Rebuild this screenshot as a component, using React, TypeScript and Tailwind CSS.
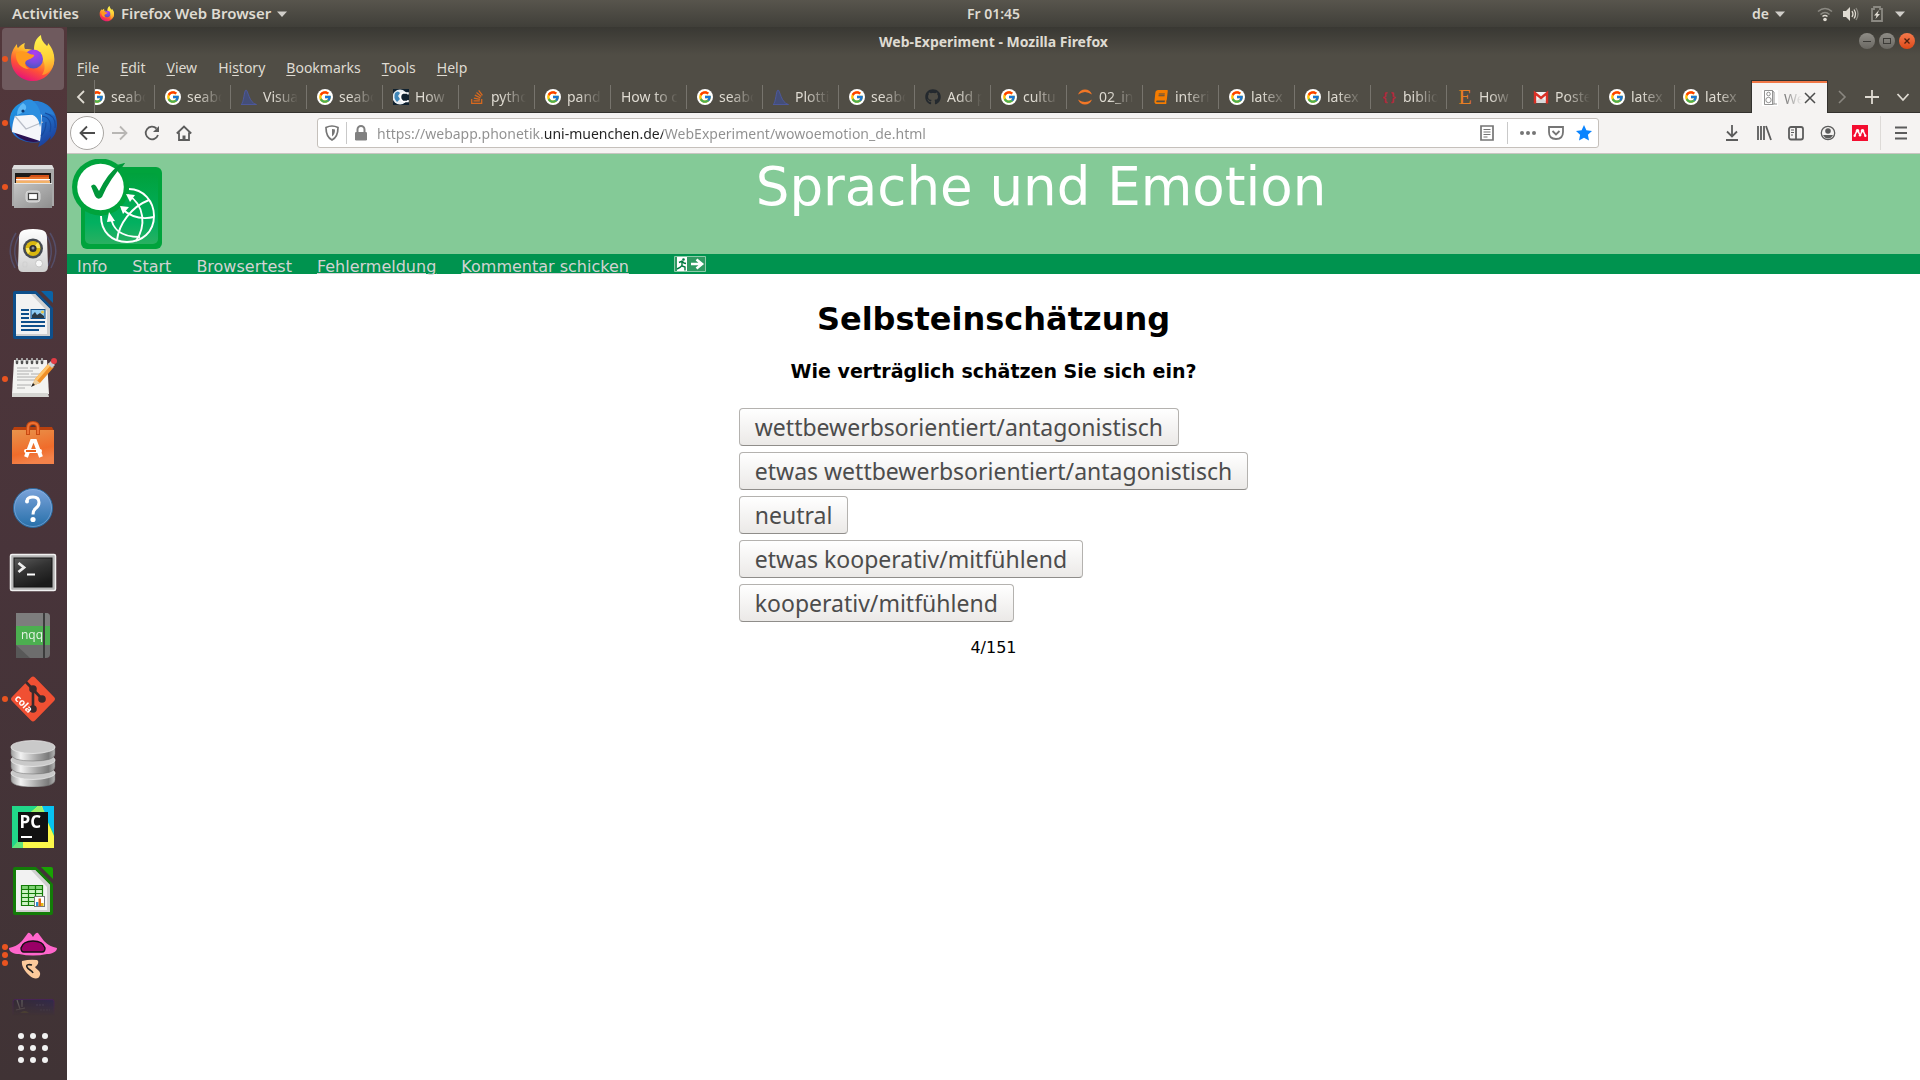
import React from "react";
import { FcGoogle } from "react-icons/fc";
import { FaGithub, FaStackOverflow, FaBook } from "react-icons/fa";

const UI = "font-['Noto_Sans',sans-serif]";

function FirefoxLogo({ className }: { className: string }) {
  return (
    <svg viewBox="0 0 48 48" className={className} aria-hidden="true">
      <defs>
        <linearGradient id="ffBody" x1="0.8" y1="0.1" x2="0.35" y2="1">
          <stop offset="0" stopColor="#fff44f" />
          <stop offset="0.3" stopColor="#ffb62a" />
          <stop offset="0.65" stopColor="#ff5236" />
          <stop offset="1" stopColor="#e6127a" />
        </linearGradient>
        <linearGradient id="ffFlame" x1="0.5" y1="0" x2="0.6" y2="1">
          <stop offset="0" stopColor="#fff44f" />
          <stop offset="0.6" stopColor="#ffcf36" />
          <stop offset="1" stopColor="#ff8a2a" />
        </linearGradient>
        <radialGradient id="ffGlobe" cx="0.55" cy="0.2" r="0.8">
          <stop offset="0" stopColor="#b03cf0" />
          <stop offset="0.6" stopColor="#7a4be0" />
          <stop offset="1" stopColor="#4c55c0" />
        </radialGradient>
      </defs>
      <path d="M2 24c0-6 2-10 6-15 0 2 0 3 1 4 3-3 4-4 7-5-1 2-1 4 0 6 3 0 6 0 9 2 6-1 10-2 15-4 4 5 6 10 5 16-2 10-10 18-21 18S2 38 2 24z" fill="url(#ffBody)" />
      <path d="M25 15c0-7 2-12 7-15 0 5 3 8 6 11 1-1 1-2 1-3 5 6 7 12 6 20-2 8-8 12-12 12 4-6 3-12 0-17-2-3-8-3-8-8z" fill="url(#ffFlame)" />
      <circle cx="24.500" cy="24" r="9.500" fill="url(#ffGlobe)" />
      <path d="M7 18c5-3 10-2 14 1 2 1 5 0 4 2-2 3-5 3-8 5-2 3 0 6 3 8-8 0-14-7-13-16z" fill="#ff9a1f" />
    </svg>
  );
}

function ThunderbirdIcon() {
  return (
    <svg viewBox="0 0 48 48" className="size-12" aria-hidden="true">
      <defs>
        <linearGradient id="tbBlue" x1="0.2" y1="0" x2="0.8" y2="1">
          <stop offset="0" stopColor="#1f9be6" />
          <stop offset="0.5" stopColor="#2272cc" />
          <stop offset="1" stopColor="#1a3a96" />
        </linearGradient>
      </defs>
      <path d="M5 36C-1 28-1 15 6 8c3-3 6-4 8-5 3-3 8-3 10-1 13-1 24 9 24 23 0 8-3 13-7 16l1-4c-4 6-8 9-13 11l2-5c-10 2-20-1-26-7z" fill="url(#tbBlue)" />
      <path d="M5 33c5 1 20 6 26 9-9 3-21-1-26-9z" fill="#2b1152" />
      <path d="M6 17l27-2c-1 9 0 17-2 27L3 33c0-5 1-11 3-16z" fill="#f4f6fa" />
      <path d="M6 17l11 13 17-7" fill="none" stroke="#b9bec8" strokeWidth="1.3" />
      <path d="M8 16C7 8 11 3 17 1c7-1 12 3 14 9 1 5 2 12 0 18-1-8-5-13-12-13-4 0-8 0-11 1z" fill="#2c8fe0" />
      <path d="M24 2c9 0 18 6 22 15-5-3-10-3-14-1-1-6-4-11-8-14z" fill="#2a7fd4" />
      <path d="M8 16c0-5 2-9 6-12 5 3 5 8-6 12z" fill="#5eb9f5" />
      <circle cx="14" cy="12" r="1.6" fill="#0e3a74" />
      <path d="M33 17c8 1 10 8 8 16M36 14c8 2 11 8 10 15M32 37c3-3 5-8 5-14" fill="none" stroke="#164a9e" strokeWidth="1.2" />
    </svg>
  );
}

function FilesIcon() {
  return (
    <svg viewBox="0 0 48 48" className="size-12" aria-hidden="true">
      <defs>
        <linearGradient id="flFront" x1="0" y1="0" x2="1" y2="1">
          <stop offset="0" stopColor="#c4c4c4" />
          <stop offset="1" stopColor="#8e8e8e" />
        </linearGradient>
      </defs>
      <path d="M5 2h38l2 4v37H3V6z" fill="#a9a9a9" />
      <path d="M5 2h38l2 4H3z" fill="#dedede" />
      <rect x="6" y="10" width="36" height="13" fill="#1d1a18" />
      <path d="M7 14h13l2-2h18v11H7z" fill="#d35019" />
      <path d="M8 14h32v9H8z" fill="#e8742c" />
      <path d="M7 16h34v1.500H7z" fill="#fff" />
      <path d="M7 18h34v3H7z" fill="#f3b268" />
      <path d="M5 20h38v25H5z" fill="url(#flFront)" />
      <path d="M5 20.500h38" stroke="#e6e6e6" />
      <rect x="17" y="28" width="14" height="11" rx="3" fill="#c9c9c9" stroke="#d8d8d8" />
      <rect x="19.500" y="30.500" width="9" height="6" fill="#fff" stroke="#444" strokeWidth="1.200" />
    </svg>
  );
}

function SpeakerIcon() {
  return (
    <svg viewBox="0 0 48 48" className="size-12" aria-hidden="true">
      <defs>
        <linearGradient id="spBody" x1="0" y1="0" x2="0" y2="1">
          <stop offset="0" stopColor="#ffffff" />
          <stop offset="0.600" stopColor="#e2e2e2" />
          <stop offset="1" stopColor="#cfcfcf" />
        </linearGradient>
      </defs>
      <g fill="none" stroke="#5f74b0" opacity="0.400">
        <path d="M7 6Q-4 23 6 41M10 9Q2 23 9 39" strokeWidth="1.500" />
        <path d="M41 6Q52 23 42 41M38 9Q46 23 39 39" strokeWidth="1.500" />
      </g>
      <path d="M15 3q9-2 18 0 5 1 5 8l1 28q0 6-5 6H14q-5 0-5-6l1-28q0-7 5-8z" fill="url(#spBody)" />
      <circle cx="24" cy="21.500" r="10" fill="#454a52" />
      <circle cx="24" cy="21.500" r="7.500" fill="#d9b70f" />
      <path d="M24 21L29 15a8 8 0 0 1 2 6zM24 21l-5 6a8 8 0 0 1-2-6z" fill="#f7e45f" />
      <circle cx="24" cy="21.500" r="3.600" fill="#2c2c30" />
      <circle cx="24" cy="21" r="1.500" fill="#8e929c" />
      <circle cx="30" cy="36.500" r="3.500" fill="#f7f7f7" stroke="#bdbdbd" strokeWidth="0.800" />
      <rect x="14" y="35" width="4" height="5" rx="1" fill="none" stroke="#cfcfcf" />
    </svg>
  );
}

function LibreDoc({ edge, corner, children }: { edge: string; corner: string; children: React.ReactNode }) {
  return (
    <svg viewBox="0 0 48 48" className="size-12" aria-hidden="true">
      <path d="M6 0h21l17 17v29q0 2-2 2H6q-2 0-2-2V2q0-2 2-2z" fill={edge} />
      <path d="M32 0h10q2 0 2 2v10z" fill={corner} />
      <path d="M7 3h19l15 15v27H7z" fill="#f2f2f2" />
      <path d="M26 3l15 15v27H7v-2h31V20L22 3z" fill="#cfcfcf" />
      {children}
    </svg>
  );
}

function WriterIcon() {
  return (
    <LibreDoc edge="#0e4f8b" corner="#0a63a6">
      <path d="M12 19h8M12 23h8M12 27h8M12 31h24M12 35h24M12 39h18" stroke="#0e4f8b" strokeWidth="2" />
      <rect x="22" y="18.500" width="14" height="9" fill="#8ecbf2" stroke="#0e4f8b" />
      <path d="M23 27v-3l3-3 2 3 3-2 4 3v2z" fill="#2b3a45" />
      <circle cx="33.500" cy="21" r="1.500" fill="#e9c64b" />
    </LibreDoc>
  );
}

function CalcIcon() {
  return (
    <LibreDoc edge="#137c08" corner="#18a303">
      <rect x="12" y="18" width="22" height="21" fill="#cdf3c4" />
      <rect x="12" y="18" width="22" height="4" fill="#7fd374" />
      <path d="M12.500 18.500h21v20h-21zM12 22.500h22M12 26.500h22M12 30.500h22M12 34.500h22M19.500 18v21M26.500 18v21" fill="none" stroke="#137c08" strokeWidth="1.200" />
      <rect x="25.500" y="29.500" width="10" height="10" fill="#fff" stroke="#777" />
      <path d="M27 35h2.500v4H27z" fill="#2b8fd6" />
      <path d="M29.500 31.500H32V39h-2.500z" fill="#e0641c" />
      <path d="M32 36h2.500v3H32z" fill="#e8b813" />
    </LibreDoc>
  );
}

function NotesIcon() {
  return (
    <svg viewBox="0 0 48 48" className="size-12" aria-hidden="true">
      <path d="M5 5h33l2 34H3z" fill="#f3f3f1" />
      <path d="M3 38h36l1 4H3z" fill="#d5d5d2" />
      <path d="M8 13h11M21 13h9M8 16h16M8 19h12M22 19h10M8 22h22M8 25h18M8 30h14M8 33h8" stroke="#a7a7a7" strokeWidth="0.900" />
      <path d="M8 8V4.500M13 8V4.500M18 8V4.500M23 8V4.500M28 8V4.500M33 8V4.500" stroke="#555" strokeWidth="2.500" strokeLinecap="round" />
      <path d="M8 6V3M13 6V3M18 6V3M23 6V3M28 6V3M33 6V3" stroke="#f4f4f4" strokeWidth="1" />
      <path d="M23 31l3-7L40 8l5 4-14 16z" fill="#f09028" />
      <path d="M26 24L40 8l2 2-14 16z" fill="#ffc46b" />
      <path d="M23 31l3-7 5 4z" fill="#ecd0a2" />
      <path d="M22 32l2-4 2 2z" fill="#222" />
      <path d="M39 9l3-3 4 4-3 3z" fill="#c9cdd2" />
      <circle cx="45" cy="6" r="3" fill="#e33c45" />
    </svg>
  );
}

function SoftwareIcon() {
  return (
    <svg viewBox="0 0 48 48" className="size-12" aria-hidden="true">
      <defs>
        <linearGradient id="swBag" x1="0" y1="0" x2="0.300" y2="1">
          <stop offset="0" stopColor="#e8944c" />
          <stop offset="0.700" stopColor="#f06c2b" />
          <stop offset="1" stopColor="#f3824a" />
        </linearGradient>
      </defs>
      <path d="M5 8h38l2 4H3z" fill="#b8400e" />
      <path d="M3 11h42v34H3z" fill="url(#swBag)" />
      <path d="M19 16V9q0-5 5-5t5 5v7" fill="none" stroke="#c84a12" strokeWidth="4" />
      <path d="M19 15V9q0-5 5-5t5 5v6" fill="none" stroke="#ee7234" strokeWidth="2" />
      <path d="M17 38l6-16h3l6 16M20 32h9" fill="none" stroke="#fff" strokeWidth="4" />
      <rect x="15" y="30" width="18" height="4" rx="2" fill="#fff" />
      <rect x="17" y="31" width="10" height="2" fill="#e8611d" />
    </svg>
  );
}

function HelpIcon() {
  return (
    <svg viewBox="0 0 48 48" className="size-12" aria-hidden="true">
      <defs>
        <linearGradient id="hpBall" x1="0" y1="0" x2="0" y2="1">
          <stop offset="0" stopColor="#7ba3da" />
          <stop offset="1" stopColor="#266fa9" />
        </linearGradient>
      </defs>
      <circle cx="24" cy="25" r="19.500" fill="url(#hpBall)" stroke="#2a699e" />
      <circle cx="24" cy="25" r="18.500" fill="none" stroke="#8fb4e2" strokeWidth="0.800" opacity="0.700" />
      <path d="M18 18q0-4 6-4t6 5.500q0 3.500-3.500 6-2.500 2-2.500 6" fill="none" stroke="#fff" strokeWidth="3" />
      <circle cx="18" cy="18.500" r="2" fill="#fff" />
      <circle cx="24" cy="36.500" r="2.600" fill="#fff" />
    </svg>
  );
}

function TerminalIcon() {
  return (
    <svg viewBox="0 0 48 48" className="size-12" aria-hidden="true">
      <defs>
        <linearGradient id="tmScreen" x1="0" y1="0" x2="0.500" y2="1">
          <stop offset="0" stopColor="#5a5a5a" />
          <stop offset="0.500" stopColor="#333" />
          <stop offset="1" stopColor="#1b1b1b" />
        </linearGradient>
      </defs>
      <rect x="1.500" y="7.500" width="45" height="36" rx="1.500" fill="#b5b5b5" stroke="#f1f1f1" strokeWidth="1.500" />
      <rect x="5" y="11" width="38" height="29" fill="url(#tmScreen)" stroke="#151515" />
      <path d="M9.500 16l5.500 4.500L9.500 25" fill="none" stroke="#eee" strokeWidth="2.800" />
      <path d="M18 27.500h8" stroke="#fff" strokeWidth="2" />
    </svg>
  );
}

function NqqIcon() {
  return (
    <svg viewBox="0 0 48 48" className="size-12" aria-hidden="true">
      <path d="M7 2h30q4 0 4 4v37q0 4-4 4H7z" fill="#6d6d6d" />
      <path d="M7 2h30q4 0 4 4v9H7z" fill="#7d7d7d" />
      <path d="M7 34l14 13H7z" fill="#585858" />
      <path d="M7 15h34v19H7z" fill="#4caf50" />
      <path d="M34 2h2v45h-2z" fill="#3c3c3c" />
      <text x="12" y="27.500" fontSize="12" fill="#e6f4e6" fontFamily="Open Sans, sans-serif">nqq</text>
    </svg>
  );
}

function GitColaIcon() {
  return (
    <svg viewBox="0 0 48 48" className="size-12" aria-hidden="true">
      <path d="M22 2.500q2-2 4 0L45 22q2 2 0 4L26 45.500q-2 2-4 0L3 26q-2-2 0-4z" fill="#f05033" />
      <path d="M17 7l16 17M24 14v20" stroke="#3a2a2c" strokeWidth="2.600" />
      <circle cx="24" cy="14" r="3.800" fill="#3a2a2c" />
      <circle cx="33" cy="24" r="3.800" fill="#3a2a2c" />
      <circle cx="24" cy="34" r="3.800" fill="#3a2a2c" />
      <text x="5" y="24" fontSize="10" fontWeight="700" fill="#fff" fontFamily="Open Sans, sans-serif" transform="rotate(45 5 24)">cola</text>
    </svg>
  );
}

function DatabaseIcon() {
  const layers = [37, 24, 11];
  return (
    <svg viewBox="0 0 48 48" className="size-12" aria-hidden="true">
      <defs>
        <linearGradient id="dbSide" x1="0" y1="0" x2="1" y2="0">
          <stop offset="0" stopColor="#a0a0a0" />
          <stop offset="0.220" stopColor="#f2f2f2" />
          <stop offset="0.600" stopColor="#a5a5a5" />
          <stop offset="0.850" stopColor="#7a7a7a" />
          <stop offset="1" stopColor="#b5b5b5" />
        </linearGradient>
      </defs>
      {layers.map((y) => (
        <g key={y}>
          <path d={`M2 ${y - 3}v7q0 7 22 7t22-7v-7z`} fill="url(#dbSide)" stroke="#6b6b6b" strokeWidth="0.500" />
          <ellipse cx="24" cy={y - 3} rx="22" ry="6.500" fill="#c9c9c9" stroke="#efefef" strokeWidth="0.700" />
        </g>
      ))}
    </svg>
  );
}

function PyCharmIcon() {
  return (
    <svg viewBox="0 0 48 48" className="size-12" aria-hidden="true">
      <path d="M3 3h42v42H3z" fill="#21d789" />
      <path d="M31 3h14v28z" fill="#07c3f2" />
      <path d="M14 16L29 3h4l4 12 8 18v12H14z" fill="#fcf84a" />
      <path d="M14 16L29 3h3l5 8-22 18z" fill="#9df06a" />
      <path d="M3 45l11-13v13z" fill="#64e37c" />
      <path d="M9 9h30v30H9z" fill="#111" />
      <text x="10.500" y="25" fontSize="17" fontWeight="700" fill="#fff" fontFamily="Open Sans, sans-serif">PC</text>
      <path d="M12 33h11v2H12z" fill="#fff" />
    </svg>
  );
}

function MouthIcon() {
  return (
    <svg viewBox="0 0 48 48" className="size-12" aria-hidden="true">
      <path d="M0 17c5-1 9-3 13-7l6-8q2-1 5 4 3-5 5-4l6 8c4 4 8 6 13 7 0 4-6 6-10 6q-14 3-28 0c-5 0-10-2-10-6z" fill="#ff66cc" />
      <path d="M12 17q2-7 12-7t12 7q0 4-3 4H15q-3 0-3-4z" fill="#990066" stroke="#111" strokeWidth="1.400" />
      <path d="M13 30q8-2 15-1c3 2 0 6-2 7 2 3 6 4 5 8-1 5-7 4-10 1-5-4-9-10-8-15z" fill="#fcca9c" />
      <path d="M24 42c-1-3-5-3-6-6-1-2 1-3 5-2" fill="none" stroke="#222" strokeWidth="1.600" />
    </svg>
  );
}

function NightIcon() {
  return (
    <svg viewBox="0 0 48 48" className="size-12" aria-hidden="true">
      <defs>
        <linearGradient id="ntSky" x1="0" y1="0" x2="1" y2="0">
          <stop offset="0" stopColor="#2d2634" />
          <stop offset="1" stopColor="#2a2458" />
        </linearGradient>
      </defs>
      <rect x="4" y="4.500" width="41" height="40" rx="2" fill="url(#ntSky)" stroke="#4a1d63" />
      <path d="M8 5l3 9M13 5v7M7 15l9-2" stroke="#777" strokeWidth="1.200" />
      <path d="M11 18q5-4 9 0z" fill="#7a7a22" />
      <path d="M27 10h8M31 15h10" stroke="#4c4a72" strokeDasharray="2 1" />
    </svg>
  );
}

const dockItems: { name: string; icon: React.ReactNode; dots: number }[] = [
  { name: "Firefox", icon: <FirefoxLogo className="size-12" />, dots: 1 },
  { name: "Thunderbird", icon: <ThunderbirdIcon />, dots: 1 },
  { name: "Files", icon: <FilesIcon />, dots: 1 },
  { name: "Rhythmbox", icon: <SpeakerIcon />, dots: 0 },
  { name: "Writer", icon: <WriterIcon />, dots: 0 },
  { name: "Text Editor", icon: <NotesIcon />, dots: 1 },
  { name: "Software", icon: <SoftwareIcon />, dots: 0 },
  { name: "Help", icon: <HelpIcon />, dots: 0 },
  { name: "Terminal", icon: <TerminalIcon />, dots: 0 },
  { name: "Notepadqq", icon: <NqqIcon />, dots: 0 },
  { name: "Git Cola", icon: <GitColaIcon />, dots: 1 },
  { name: "Database", icon: <DatabaseIcon />, dots: 0 },
  { name: "PyCharm", icon: <PyCharmIcon />, dots: 0 },
  { name: "Calc", icon: <CalcIcon />, dots: 0 },
  { name: "Speech Recorder", icon: <MouthIcon />, dots: 3 },
  { name: "Night", icon: <NightIcon />, dots: 0 },
];

function Dock() {
  return (
    <nav aria-label="Dock" className="flex w-[67px] shrink-0 flex-col bg-linear-to-b from-[#52373b] via-[#48343a] to-[#403335]">
      <ul className="min-h-0 flex-1 overflow-hidden [mask-image:linear-gradient(to_top,transparent,black_24px)]">
        {dockItems.map((item, i) => (
          <li key={item.name} className="relative flex h-16 items-center pl-0.5">
            <button
              aria-label={item.name}
              className={
                i === 0
                  ? "flex h-[62px] w-[62px] items-center justify-center rounded-[4px] bg-[#6f5a5e]"
                  : "flex h-[62px] w-[62px] items-center justify-center"
              }
            >
              {item.icon}
            </button>
            <span className="absolute inset-y-0 left-0.5 flex flex-col justify-center gap-0.5">
              {Array.from({ length: item.dots }, (_, d) => (
                <span key={d} className="size-1.5 rounded-full bg-[#e95420]" />
              ))}
            </span>
          </li>
        ))}
      </ul>
      <button aria-label="Show Applications" className="mr-[1px] flex h-16 shrink-0 items-center justify-center">
        <span className="grid grid-cols-3 gap-1.5">
          {Array.from({ length: 9 }, (_, d) => (
            <span key={d} className="size-1.5 rounded-full bg-[#f2f2f2]" />
          ))}
        </span>
      </button>
    </nav>
  );
}

function Caret() {
  return (
    <svg viewBox="0 0 10 6" className="h-1.5 w-2.5" aria-hidden="true">
      <path d="M0 0.500h10L5 6z" fill="#d0cec9" />
    </svg>
  );
}

function SystemBar() {
  return (
    <header className="grid h-[27px] shrink-0 grid-cols-3 items-center bg-linear-to-b from-[#58554d] to-[#403f39] text-[14px] font-semibold text-[#dfdbd2]">
      <div className="flex items-center pl-3 text-[15px]">
        <button className="mr-5">Activities</button>
        <button className="flex items-center gap-1.5">
          <FirefoxLogo className="size-4" />
          Firefox Web Browser
          <Caret />
        </button>
      </div>
      <button className="pl-[67px] text-center">Fr 01:45</button>
      <div className="flex items-center justify-end pr-[15px]">
        <button className="mr-8 flex items-center gap-1.5">
          de
          <Caret />
        </button>
        <button className="flex items-center gap-2.5" aria-label="System menu">
          <svg viewBox="0 0 16 16" className="size-4" aria-hidden="true" fill="none">
            <path d="M1 5.500Q8-.5 15 5.500M3.500 8.500Q8 4.500 12.500 8.500" stroke="#8b8982" strokeWidth="1.600" />
            <path d="M5.500 10.500Q8 8.500 10.500 10.500" stroke="#dfdbd2" strokeWidth="1.600" />
            <circle cx="8" cy="13.500" r="1.800" fill="#dfdbd2" />
          </svg>
          <svg viewBox="0 0 16 16" className="size-4" aria-hidden="true" fill="none">
            <path d="M0 5h3l4-4v14l-4-4H0z" fill="#dfdbd2" />
            <path d="M9 5q2 3 0 6M11 3.500q3 4.500 0 9" stroke="#dfdbd2" strokeWidth="1.300" />
            <path d="M13 2q4 6 0 12" stroke="#8b8982" strokeWidth="1.300" />
          </svg>
          <svg viewBox="0 0 16 16" className="size-4" aria-hidden="true">
            <path d="M5 1h6v2h2v12H3V3h2z" fill="none" stroke="#8b8982" strokeWidth="1.800" />
            <path d="M10 4L5 9.500h2.500L6.500 13 11 8H8.500z" fill="#dfdbd2" />
          </svg>
          <Caret />
        </button>
      </div>
    </header>
  );
}

function TitleBar() {
  return (
    <div className="grid h-7 grid-cols-[1fr_auto_1fr] items-center bg-linear-to-b from-[#393833] to-[#504d45] text-[14px] font-bold text-[#dfdbd2]">
      <span />
      <span>Web-Experiment - Mozilla Firefox</span>
      <div className="flex justify-end gap-1 pr-[5px]">
        <button aria-label="Minimize" className="flex size-4 items-center justify-center rounded-full bg-linear-to-b from-[#8f8d87] to-[#6a6862]">
          <span className="h-px w-2 bg-[#3c3b37]" />
        </button>
        <button aria-label="Maximize" className="flex size-4 items-center justify-center rounded-full bg-linear-to-b from-[#8f8d87] to-[#6a6862]">
          <span className="h-1.5 w-2 border border-[#3c3b37]" />
        </button>
        <button aria-label="Close" className="flex size-4 items-center justify-center rounded-full bg-linear-to-b from-[#f4794b] to-[#dd4814]">
          <svg viewBox="0 0 8 8" className="size-2" aria-hidden="true">
            <path d="M1.500 1.500l5 5M6.500 1.500l-5 5" stroke="#4d200e" strokeWidth="1.300" />
          </svg>
        </button>
      </div>
    </div>
  );
}

function MenuBar() {
  const menus: [string, string, string][] = [
    ["", "F", "ile"],
    ["", "E", "dit"],
    ["", "V", "iew"],
    ["Hi", "s", "tory"],
    ["", "B", "ookmarks"],
    ["", "T", "ools"],
    ["", "H", "elp"],
  ];
  return (
    <div className="flex h-[25px] items-center gap-[21px] pl-2.5 text-[14px] text-[#dfdbd2]">
      {menus.map(([pre, key, post]) => (
        <button key={key + post}>
          {pre}
          <span className="underline underline-offset-2">{key}</span>
          {post}
        </button>
      ))}
    </div>
  );
}

function Google() {
  return (
    <span className="flex size-4 shrink-0 items-center justify-center rounded-full bg-white">
      <FcGoogle className="size-3.5" />
    </span>
  );
}

function Distribution() {
  return (
    <svg viewBox="0 0 16 16" className="size-4 shrink-0" aria-hidden="true">
      <path d="M0 15.500C3 14 3 1 5 1S8 14 15.500 15.500z" fill="#444e78" stroke="#4c5bab" strokeWidth="0.800" />
    </svg>
  );
}

function CIcon() {
  return (
    <svg viewBox="0 0 16 16" className="size-4 shrink-0" aria-hidden="true">
      <path d="M0 0h16v16H0z" fill="#10212e" />
      <circle cx="7" cy="8" r="7.500" fill="#e9eef2" />
      <path d="M2 4q3-3 5 0L5 7l2 3-3 3q-4-4-2-9z" fill="#3f86b8" />
      <path d="M15 5.500V4H10Q7.500 4.500 7.500 8t2.500 4.500h5V11" fill="#10212e" stroke="#fff" strokeWidth="1.500" />
    </svg>
  );
}

function JupyterIcon() {
  return (
    <svg viewBox="0 0 16 16" className="size-4 shrink-0" aria-hidden="true">
      <path d="M1 5.500Q3 .5 8 .5T15 5.500Q11 3 8 3T1 5.500zM1 10.500Q3 15.500 8 15.500T15 10.500Q11 13 8 13T1 10.500z" fill="#f37726" />
    </svg>
  );
}

function GmailIcon() {
  return (
    <svg viewBox="0 0 16 16" className="size-4 shrink-0" aria-hidden="true">
      <path d="M1 3h14v11H1z" fill="#f2f2f2" />
      <path d="M1 14L8 8l7 6z" fill="#d8d8d8" />
      <path d="M2 14.500V4l6 5 6-5v10.500" fill="none" stroke="#d93025" strokeWidth="2.400" />
    </svg>
  );
}

const glyph = "flex w-4 shrink-0 items-center justify-center";

const tabs: { label: string; icon: React.ReactNode }[] = [
  { label: "seabo", icon: <Google /> },
  { label: "seabo", icon: <Google /> },
  { label: "Visua", icon: <Distribution /> },
  { label: "seabo", icon: <Google /> },
  { label: "How", icon: <CIcon /> },
  { label: "pytho", icon: <FaStackOverflow className="size-4 shrink-0 text-[#d9691e]" /> },
  { label: "pand", icon: <Google /> },
  { label: "How to c", icon: null },
  { label: "seabo", icon: <Google /> },
  { label: "Plotti", icon: <Distribution /> },
  { label: "seabo", icon: <Google /> },
  { label: "Add p", icon: <FaGithub className="size-4 shrink-0 text-[#24292e]" /> },
  { label: "cultu", icon: <Google /> },
  { label: "02_in", icon: <JupyterIcon /> },
  { label: "interi", icon: <FaBook className="size-4 shrink-0 -skew-x-6 p-px text-[#f57c00]" /> },
  { label: "latex", icon: <Google /> },
  { label: "latex", icon: <Google /> },
  { label: "biblio", icon: <span className={`${glyph} gap-[3px] text-[13px] font-bold text-[#b02a3c]`}><span>{"{"}</span><span>{"}"}</span></span> },
  { label: "How", icon: <span className={`${glyph} font-['Liberation_Serif',serif] text-[22px] leading-none text-[#e67e22]`}>E</span> },
  { label: "Poste", icon: <GmailIcon /> },
  { label: "latex", icon: <Google /> },
  { label: "latex", icon: <Google /> },
];

function TabStrip() {
  return (
    <div className="flex h-[33px] text-[14px] text-[#dfdbd2] shadow-[inset_0_-1px_0_#33322e]">
      <button aria-label="Scroll left" className="flex w-[27px] shrink-0 items-center justify-center">
        <svg viewBox="0 0 12 14" className="h-3.5 w-3" aria-hidden="true" fill="none">
          <path d="M9 1L3 7l6 6" stroke="#dfdbd2" strokeWidth="1.800" />
        </svg>
      </button>
      <div role="tablist" className="flex min-w-0 flex-1 items-center justify-end overflow-hidden border-l border-[#77746d]">
        {tabs.map((t, i) => (
          <button
            key={i}
            role="tab"
            aria-selected="false"
            className={
              i === tabs.length - 1
                ? "flex h-6 w-[76px] shrink-0 items-center gap-1.5 px-2"
                : "flex h-6 w-[76px] shrink-0 items-center gap-1.5 border-r border-[#77746d] pr-2 pl-2.5"
            }
          >
            {t.icon}
            <span className="flex-1 overflow-hidden text-left whitespace-nowrap [mask-image:linear-gradient(to_left,transparent,black_24px)]">
              {t.label}
            </span>
          </button>
        ))}
        <div className="flex h-full w-[77px] shrink-0 items-center border-x border-t border-[#33322e] bg-[#f5f3f2]">
          <div className="flex h-full w-full items-center gap-0.5 border-t-2 border-[#f07746] pl-2.5">
            <button role="tab" aria-selected="true" aria-label="Web-Experiment" className="flex min-w-0 items-center gap-1.5 text-[#4c4c4c]">
              <svg viewBox="0 0 16 16" className="size-4 shrink-0" aria-hidden="true" fill="none">
                <path d="M0 0h16v16H0z" fill="#fff" />
                <path d="M2.500.500h8v14h-8zM10.500 1l1.500 1v12l-1.500.500M12 14h3" stroke="#777" strokeWidth="0.800" />
                <circle cx="6.500" cy="4" r="1.800" stroke="#777" strokeWidth="0.800" />
                <circle cx="6.500" cy="10" r="2.700" stroke="#777" strokeWidth="0.800" />
              </svg>
              <span className="w-[18px] overflow-hidden whitespace-nowrap [mask-image:linear-gradient(to_left,transparent,black_24px)]">
                We
              </span>
            </button>
            <button aria-label="Close tab">
              <svg viewBox="0 0 12 12" className="size-3" aria-hidden="true">
                <path d="M1 1l10 10M11 1L1 11" stroke="#4c4c4c" strokeWidth="1.500" />
              </svg>
            </button>
          </div>
        </div>
      </div>
      <div className="flex w-[92px] shrink-0 items-center gap-4 pl-2">
        <button aria-label="Scroll right">
          <svg viewBox="0 0 12 14" className="h-3.5 w-3" aria-hidden="true" fill="none">
            <path d="M3 1l6 6-6 6" stroke="#8a8780" strokeWidth="1.600" />
          </svg>
        </button>
        <button aria-label="New tab">
          <svg viewBox="0 0 16 16" className="size-4" aria-hidden="true">
            <path d="M8 1v14M1 8h14" stroke="#dfdbd2" strokeWidth="1.800" />
          </svg>
        </button>
        <button aria-label="List all tabs">
          <svg viewBox="0 0 14 10" className="h-2.5 w-3.5" aria-hidden="true" fill="none">
            <path d="M1.500 2L7 8l5.500-6" stroke="#dfdbd2" strokeWidth="1.800" />
          </svg>
        </button>
      </div>
    </div>
  );
}

function ToolIcon({ label, children }: { label: string; children: React.ReactNode }) {
  return (
    <button aria-label={label} className="shrink-0">
      <svg viewBox="0 0 16 16" className="size-4" fill="none" stroke="#5c5c5c" strokeWidth="1.800" aria-hidden="true">
        {children}
      </svg>
    </button>
  );
}

function NavBar() {
  return (
    <div className="flex h-[41px] items-center border-b border-[#c8c5c1] bg-[#f5f3f2] pl-[3px]">
      <button aria-label="Back" className="mr-2 flex size-[34px] items-center justify-center rounded-full border border-[#a9a6a3] bg-white">
        <svg viewBox="0 0 16 16" className="size-4" fill="none" stroke="#4c4c4c" strokeWidth="1.800" aria-hidden="true">
          <path d="M16 8H1.500M8 1.500L1.500 8 8 14.500" />
        </svg>
      </button>
      <div className="flex items-center gap-4">
        <button aria-label="Forward">
          <svg viewBox="0 0 16 16" className="size-4" fill="none" stroke="#b8b6b4" strokeWidth="1.800" aria-hidden="true">
            <path d="M0 8h14.500M8 1.500L14.500 8 8 14.500" />
          </svg>
        </button>
        <ToolIcon label="Reload">
          <path d="M14 10a6.300 6.300 0 1 1-1.500-6.500" />
          <path d="M15 1v6H9z" fill="#5c5c5c" stroke="none" />
        </ToolIcon>
        <ToolIcon label="Home">
          <path d="M.8 8.500L8 1.500l7.200 7M3 7.500V15h10V7.500" />
          <path d="M8 15v-4.500" strokeWidth="3" />
        </ToolIcon>
      </div>
      <div className="ml-[125px] flex h-[30px] min-w-0 flex-1 items-center rounded-[3px] border border-[#c5c0bb] bg-white px-1.5">
        <button aria-label="Tracking protection">
          <svg viewBox="0 0 16 16" className="size-4" fill="none" stroke="#757575" strokeWidth="1.700" aria-hidden="true">
            <path d="M8 1Q11 1 14 2.500 14 12 8 15 2 12 2 2.500 5 1 8 1z" />
            <path d="M8 4q2 0 3 .5Q11 9.500 8 11.500z" fill="#757575" stroke="none" />
          </svg>
        </button>
        <span className="mx-1.5 h-[22px] w-px bg-[#c9c9c9]" />
        <button aria-label="Connection secure">
          <svg viewBox="0 0 16 16" className="size-4" aria-hidden="true">
            <path d="M4.500 8V4.500a3.500 3.500 0 0 1 7 0V8" fill="none" stroke="#808080" strokeWidth="2" />
            <rect x="2" y="7" width="12" height="8.500" rx="1.200" fill="#808080" />
          </svg>
        </button>
        <input
          aria-label="Address"
          readOnly
          value="https://webapp.phonetik.uni-muenchen.de/WebExperiment/wowoemotion_de.html"
          className="ml-2 min-w-0 flex-1 bg-[linear-gradient(to_right,#8f8f8f_168px,#222_168px,#222_286px,#8f8f8f_286px)] bg-clip-text text-[14px] text-transparent outline-none"
        />
        <div className="flex items-center gap-3">
          <ToolIcon label="Reader view">
            <path d="M2 1h12v14H2z" strokeWidth="1.700" stroke="#757575" />
            <path d="M4.500 4.500h7M4.500 7h7M4.500 9.500h7M4.500 12h4" strokeWidth="1.100" stroke="#757575" />
          </ToolIcon>
          <span className="h-[22px] w-px bg-[#c9c9c9]" />
          <ToolIcon label="Page actions">
            <g fill="#757575" stroke="none">
              <circle cx="2" cy="8" r="2" />
              <circle cx="8" cy="8" r="2" />
              <circle cx="14" cy="8" r="2" />
            </g>
          </ToolIcon>
          <ToolIcon label="Save to Pocket">
            <path d="M1 2h14v5q0 7-7 7T1 7z" stroke="#757575" />
            <path d="M4.500 6L8 9.500 11.500 6" stroke="#757575" />
          </ToolIcon>
          <ToolIcon label="Bookmark">
            <path d="M8 0l2.400 5.200 5.600.7-4.100 3.900L13 15.600 8 12.800 3 15.600l1.100-5.800L0 5.900l5.600-.7z" fill="#0a84ff" stroke="none" />
          </ToolIcon>
        </div>
      </div>
      <div className="ml-[125px] flex items-center gap-4 pr-[11px]">
        <ToolIcon label="Downloads">
          <path d="M8 0v11M3 6.500l5 5 5-5M2 15h12" />
        </ToolIcon>
        <ToolIcon label="Library">
          <path d="M2 1v14M5 1v14M8 1v14" />
          <path d="M10 1l5 14" />
        </ToolIcon>
        <ToolIcon label="Sidebars">
          <rect x="1" y="2" width="14" height="12.500" rx="2" />
          <path d="M8 2v12" />
          <path d="M3 5h3M3 7.500h3M3 10h2" strokeWidth="1.200" />
        </ToolIcon>
        <ToolIcon label="Account">
          <circle cx="8" cy="8" r="6.700" strokeWidth="1.300" />
          <circle cx="8" cy="6" r="2.800" fill="#5c5c5c" stroke="none" />
          <path d="M3 10h10Q11 13.500 8 13.500T3 10z" fill="#5c5c5c" stroke="none" />
        </ToolIcon>
        <ToolIcon label="Mendeley">
          <path d="M0 0h16v16H0z" fill="#f40d30" stroke="none" />
          <g fill="#fff" stroke="none">
            <circle cx="5.500" cy="5.800" r="1.800" />
            <circle cx="10.500" cy="5.800" r="1.800" />
            <circle cx="2.700" cy="10.800" r="1.200" />
            <circle cx="8" cy="10.300" r="1.200" />
            <circle cx="13.300" cy="10.800" r="1.200" />
          </g>
          <path d="M2.700 10.500Q3.500 9 4.500 6.500M6.500 6.500Q7 9 8 9.500T9.500 6.500M11.500 6.500Q12.500 9 13.300 10.500" stroke="#fff" strokeWidth="1.500" />
        </ToolIcon>
        <span className="-mx-1 h-[34px] w-px bg-[#dddad7]" />
        <ToolIcon label="Open menu">
          <path d="M2 2.500h12M2 8h12M2 13.500h12" />
        </ToolIcon>
      </div>
    </div>
  );
}

function PageLogo() {
  return (
    <svg viewBox="0 0 90 90" className="size-[90px]" role="img" aria-label="Logo">
      <defs>
        <linearGradient id="lgInner" x1="0" y1="0" x2="0" y2="1">
          <stop offset="0" stopColor="#00a13c" />
          <stop offset="0.700" stopColor="#02b060" />
          <stop offset="1" stopColor="#2ab061" />
        </linearGradient>
      </defs>
      <rect x="9" y="8" width="81" height="82" rx="6" fill="#00a33c" />
      <rect x="13" y="14" width="73" height="71" rx="5" fill="url(#lgInner)" />
      <circle cx="28.500" cy="28" r="28.500" fill="#00a33c" />
      <path d="M40 7L53 4Q47 12 42 22z" fill="#00a33c" />
      <circle cx="28.500" cy="28" r="23.300" fill="#fff" />
      <g fill="none" stroke="#fff" strokeWidth="1.900">
        <path d="M57 30c14 0 25 12 25 27 0 16-12 26-27 26S29 73 29 57" />
        <path d="M45 81c2-16 14-33 32-40" />
        <path d="M56 36c17 10 18 31 8 46" />
        <path d="M50 50c9 8 19 11 32 8" />
        <path d="M39 58c1 10 8 20 29 20" />
      </g>
      <path d="M54 35l9 1-5 7zM48 47l9 1-6 7zM37 53l6 9-8 1z" fill="#fff" />
      <path d="M19 27q3-3 5 0l3 5Q36 14 46 7l7-3Q38 19 30 38q-4 4-7-1z" fill="#00963a" />
    </svg>
  );
}

function ExitSign() {
  return (
    <svg viewBox="0 0 32 16" className="h-4 w-8" aria-hidden="true">
      <path d="M.5.500h31v15H.500z" fill="#2f9a62" stroke="#8fcbaa" />
      <path d="M3 1h10v14H3z" fill="#fff" />
      <circle cx="9.500" cy="3.500" r="1.300" fill="#007a40" />
      <path d="M5 6.500L8 5l2 2 2 .5M8 5v5l3 1v3.500M8 9.500l-2 2-3 1.500" fill="none" stroke="#007a40" strokeWidth="1.400" />
      <path d="M17 8h10M22.500 3.500L28 8l-5.500 4.500" fill="none" stroke="#fff" strokeWidth="2.600" />
    </svg>
  );
}

const answers = [
  "wettbewerbsorientiert/antagonistisch",
  "etwas wettbewerbsorientiert/antagonistisch",
  "neutral",
  "etwas kooperativ/mitfühlend",
  "kooperativ/mitfühlend",
];

function ExperimentPage() {
  return (
    <div className="flex-1 bg-white font-['DejaVu_Sans',sans-serif] text-base text-black">
      <header className="flex h-[100px] bg-[#84ca97] pt-[5px] pl-[5px]">
        <PageLogo />
        <p className="flex-1 text-center text-[53px] leading-[56px] text-white">Sprache und Emotion</p>
      </header>
      <nav className="flex h-5 items-start bg-[#00934f] pl-2.5 leading-[26px] text-[#d3d3d3]">
        <a href="#info" className="mr-[25px]">Info</a>
        <a href="#start" className="mr-[25px]">Start</a>
        <a href="#browsertest" className="mr-[25px]">Browsertest</a>
        <a href="#fehler" className="mr-[25px] underline">Fehlermeldung</a>
        <a href="#kommentar" className="mr-[45px] underline">Kommentar schicken</a>
        <a href="#exit" aria-label="Beenden" className="pt-0.5"><ExitSign /></a>
      </nav>
      <main className="flex flex-col items-center">
        <h1 className="mt-[26px] text-[32px] leading-[38px] font-bold">Selbsteinschätzung</h1>
        <h2 className="mt-[22px] text-[19px] leading-[22px] font-bold">Wie verträglich schätzen Sie sich ein?</h2>
        <div className="mt-[26px] flex flex-col items-start gap-1.5">
          {answers.map((a) => (
            <button
              key={a}
              className="h-[38px] rounded-[4px] border border-[#b4b2af] border-b-[#8f8d8a] bg-linear-to-b from-white to-[#ebe9e7] px-[15px] font-['Noto_Sans',sans-serif] text-[23px] leading-[36px] text-[#4c4c4c]"
            >
              {a}
            </button>
          ))}
        </div>
        <p className="mt-4 leading-5">4/151</p>
      </main>
    </div>
  );
}

export default function App() {
  return (
    <div className={`flex h-screen flex-col overflow-hidden bg-[#504d45] ${UI}`}>
      <SystemBar />
      <div className="flex min-h-0 flex-1">
        <Dock />
        <div className="flex min-w-0 flex-1 flex-col">
          <TitleBar />
          <MenuBar />
          <TabStrip />
          <NavBar />
          <ExperimentPage />
        </div>
      </div>
    </div>
  );
}
